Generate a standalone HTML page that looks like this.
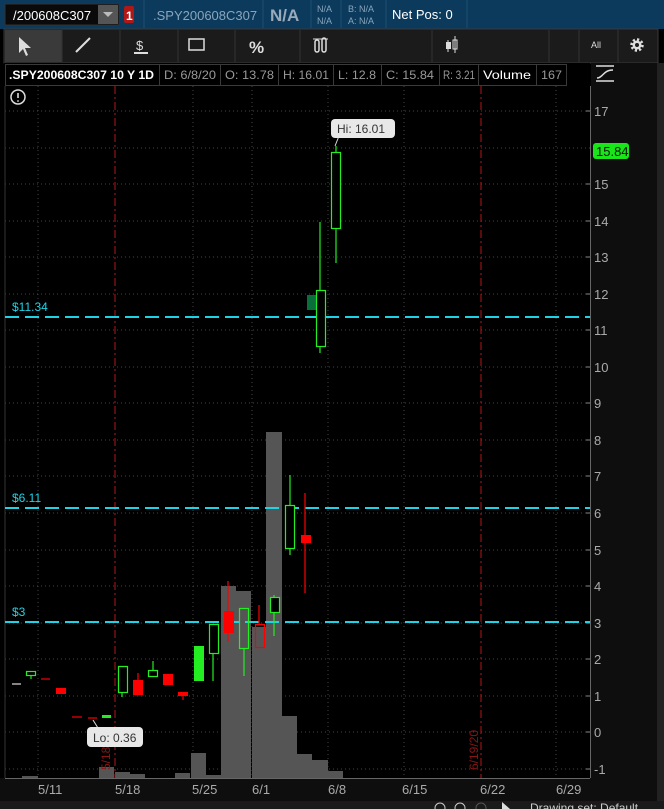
<!DOCTYPE html>
<html><head><meta charset="utf-8"><style>
html,body{margin:0;padding:0;background:#000;width:664px;height:809px;overflow:hidden;font-family:"Liberation Sans",sans-serif}
svg{display:block}
</style></head><body>
<svg width="664" height="809" viewBox="0 0 664 809" xmlns="http://www.w3.org/2000/svg" font-family="Liberation Sans, sans-serif">
<rect width="664" height="809" fill="#000"/>
<!-- top bar -->
<rect x="0" y="0" width="664" height="29" fill="#0b3a5c"/>
<rect x="5" y="4" width="114" height="21" fill="#0a0a0a" stroke="#333"/>
<text x="13" y="20" font-size="13" fill="#fff">/200608C307</text>
<rect x="98" y="5" width="20" height="19" fill="#555"/>
<path d="M103 12 L113 12 L108 17 Z" fill="#bbb"/>
<rect x="124" y="6" width="10" height="17" rx="2" fill="#b01818"/>
<text x="126" y="20" font-size="12" fill="#fff" font-weight="bold">1</text>
<line x1="144" y1="0" x2="144" y2="28" stroke="#1c5070"/>
<text x="153" y="20" font-size="13" fill="#8aa5bb">.SPY200608C307</text>
<line x1="263" y1="0" x2="263" y2="28" stroke="#1c5070"/>
<text x="270" y="21" font-size="17" fill="#9ab" font-weight="bold">N/A</text>
<line x1="311" y1="0" x2="311" y2="28" stroke="#1c5070"/>
<text x="317" y="12" font-size="9" fill="#8aa5bb">N/A</text>
<text x="317" y="24" font-size="9" fill="#8aa5bb">N/A</text>
<line x1="341" y1="0" x2="341" y2="28" stroke="#1c5070"/>
<text x="348" y="12" font-size="9" fill="#8aa5bb">B: N/A</text>
<text x="348" y="24" font-size="9" fill="#8aa5bb">A: N/A</text>
<line x1="386" y1="0" x2="386" y2="28" stroke="#1c5070"/>
<text x="392" y="19" font-size="13" fill="#fff">Net Pos: 0</text>
<line x1="467" y1="0" x2="467" y2="28" stroke="#1c5070"/>
<!-- toolbar -->
<rect x="4" y="29" width="654" height="34" fill="#1b1b1b" stroke="#3a3a3a"/>
<rect x="5" y="30" width="57" height="32" fill="#3a3a3a"/>
<g stroke="#333"><line x1="62" y1="30" x2="62" y2="62"/><line x1="120" y1="30" x2="120" y2="62"/><line x1="178" y1="30" x2="178" y2="62"/><line x1="235" y1="30" x2="235" y2="62"/><line x1="300" y1="30" x2="300" y2="62"/><line x1="432" y1="30" x2="432" y2="62"/><line x1="549" y1="30" x2="549" y2="62"/><line x1="579" y1="30" x2="579" y2="62"/><line x1="618" y1="30" x2="618" y2="62"/></g>
<path d="M19 37 L19 53 L23 49 L26 56 L28 55 L25 48 L31 48 Z" fill="#ddd"/>
<line x1="76" y1="52" x2="90" y2="38" stroke="#ddd" stroke-width="2"/>
<text x="136" y="50" font-size="13" fill="#ddd">$</text>
<line x1="134" y1="53" x2="148" y2="53" stroke="#ddd" stroke-width="2"/>
<rect x="189" y="39" width="15" height="11" fill="none" stroke="#ddd" stroke-width="1.5"/>
<text x="249" y="53" font-size="17" font-weight="bold" fill="#ddd">%</text>
<rect x="315" y="40" width="4" height="12" rx="2" fill="none" stroke="#ddd" stroke-width="1.5"/>
<rect x="322" y="38" width="4" height="14" rx="2" fill="none" stroke="#ddd" stroke-width="1.5"/>
<line x1="313" y1="39" x2="328" y2="39" stroke="#ddd"/>
<rect x="446" y="42" width="5" height="7" fill="#ddd"/><line x1="448" y1="40" x2="448" y2="52" stroke="#ddd"/>
<rect x="453" y="40" width="4" height="9" fill="none" stroke="#ddd"/><line x1="455" y1="36" x2="455" y2="53" stroke="#ddd"/>
<text x="591" y="48" font-size="9" fill="#ddd">All</text>
<circle cx="637" cy="45" r="5" fill="none" stroke="#ddd" stroke-width="3.5" stroke-dasharray="2 1.9"/>
<circle cx="637" cy="45" r="4.5" fill="#ddd"/><circle cx="637" cy="45" r="2" fill="#1b1b1b"/>
<!-- header row -->
<rect x="4" y="63" width="586" height="23" fill="#000"/>
<g stroke="#3a3a3a" fill="none">
<rect x="5.5" y="64.5" width="154" height="21"/><rect x="159.5" y="64.5" width="61" height="21"/><rect x="220.5" y="64.5" width="58" height="21"/><rect x="278.5" y="64.5" width="55" height="21"/><rect x="333.5" y="64.5" width="48" height="21"/><rect x="381.5" y="64.5" width="58" height="21"/><rect x="439.5" y="64.5" width="39" height="21"/><rect x="478.5" y="64.5" width="58" height="21"/><rect x="536.5" y="64.5" width="30" height="21"/>
</g>
<g font-size="12" fill="#999" lengthAdjust="spacingAndGlyphs"><text x="9" y="79" fill="#fff" font-weight="bold" textLength="145" lengthAdjust="spacingAndGlyphs">.SPY200608C307 10 Y 1D</text>
<text x="164" y="79" textLength="52" lengthAdjust="spacingAndGlyphs">D: 6/8/20</text><text x="225" y="79" textLength="49" lengthAdjust="spacingAndGlyphs">O: 13.78</text><text x="283" y="79" textLength="46" lengthAdjust="spacingAndGlyphs">H: 16.01</text><text x="338" y="79" textLength="38" lengthAdjust="spacingAndGlyphs">L: 12.8</text><text x="386" y="79" textLength="48" lengthAdjust="spacingAndGlyphs">C: 15.84</text><text x="443" y="79" textLength="32" lengthAdjust="spacingAndGlyphs">R: 3.21</text><text x="483" y="79" fill="#fff" textLength="48" lengthAdjust="spacingAndGlyphs">Volume</text><text x="541" y="79" textLength="21" lengthAdjust="spacingAndGlyphs">167</text></g>
<!-- right panel -->
<rect x="591" y="63" width="73" height="746" fill="#0e0e0e"/>
<line x1="590.5" y1="86" x2="590.5" y2="778" stroke="#666"/>
<rect x="657" y="63" width="7" height="746" fill="#222"/>
<line x1="596" y1="66" x2="614" y2="66" stroke="#ddd" stroke-width="1.5"/>
<line x1="596" y1="81" x2="614" y2="81" stroke="#ddd" stroke-width="1.5"/>
<path d="M597 78 C603 78 603 70 613 70" stroke="#ddd" fill="none" stroke-width="1.5"/>
<!-- grid -->
<g stroke="#444" stroke-dasharray="1 3">
<line x1="5" y1="111" x2="590" y2="111"/><line x1="5" y1="148" x2="590" y2="148"/><line x1="5" y1="184" x2="590" y2="184"/><line x1="5" y1="221" x2="590" y2="221"/><line x1="5" y1="257" x2="590" y2="257"/><line x1="5" y1="294" x2="590" y2="294"/><line x1="5" y1="330" x2="590" y2="330"/><line x1="5" y1="367" x2="590" y2="367"/><line x1="5" y1="403" x2="590" y2="403"/><line x1="5" y1="440" x2="590" y2="440"/><line x1="5" y1="476" x2="590" y2="476"/><line x1="5" y1="513" x2="590" y2="513"/><line x1="5" y1="550" x2="590" y2="550"/><line x1="5" y1="586" x2="590" y2="586"/><line x1="5" y1="623" x2="590" y2="623"/><line x1="5" y1="659" x2="590" y2="659"/><line x1="5" y1="696" x2="590" y2="696"/><line x1="5" y1="732" x2="590" y2="732"/><line x1="5" y1="769" x2="590" y2="769"/>
<line x1="38" y1="86" x2="38" y2="778"/><line x1="193" y1="86" x2="193" y2="778"/><line x1="252" y1="86" x2="252" y2="778"/><line x1="328" y1="86" x2="328" y2="778"/><line x1="404" y1="86" x2="404" y2="778"/><line x1="556" y1="86" x2="556" y2="778"/>
</g>
<line x1="5" y1="86" x2="5" y2="778" stroke="#333"/>
<!-- price labels -->
<g font-size="13" fill="#aaa">
<text x="594" y="116">17</text><text x="594" y="189">15</text><text x="594" y="226">14</text><text x="594" y="262">13</text><text x="594" y="299">12</text><text x="594" y="335">11</text><text x="594" y="372">10</text><text x="594" y="408">9</text><text x="594" y="445">8</text><text x="594" y="481">7</text><text x="594" y="518">6</text><text x="594" y="555">5</text><text x="594" y="591">4</text><text x="594" y="628">3</text><text x="594" y="664">2</text><text x="594" y="701">1</text><text x="594" y="737">0</text><text x="594" y="774">-1</text>
</g>
<g stroke="#888"><line x1="586" y1="111" x2="590" y2="111"/><line x1="586" y1="184" x2="590" y2="184"/><line x1="586" y1="221" x2="590" y2="221"/><line x1="586" y1="257" x2="590" y2="257"/><line x1="586" y1="294" x2="590" y2="294"/><line x1="586" y1="330" x2="590" y2="330"/><line x1="586" y1="367" x2="590" y2="367"/><line x1="586" y1="403" x2="590" y2="403"/><line x1="586" y1="440" x2="590" y2="440"/><line x1="586" y1="476" x2="590" y2="476"/><line x1="586" y1="513" x2="590" y2="513"/><line x1="586" y1="550" x2="590" y2="550"/><line x1="586" y1="586" x2="590" y2="586"/><line x1="586" y1="623" x2="590" y2="623"/><line x1="586" y1="659" x2="590" y2="659"/><line x1="586" y1="696" x2="590" y2="696"/><line x1="586" y1="732" x2="590" y2="732"/><line x1="586" y1="769" x2="590" y2="769"/></g>
<rect x="593" y="143" width="36" height="16" rx="3" fill="#19e619"/>
<text x="596" y="156" font-size="13" fill="#111">15.84</text>
<!-- volume -->
<g fill="#555">
<rect x="22" y="776" width="16" height="2"/><rect x="99" y="767" width="15" height="11"/><rect x="115" y="772" width="15" height="6"/><rect x="130" y="774" width="15" height="4"/><rect x="175" y="773" width="15" height="5"/><rect x="191" y="753" width="15" height="25"/><rect x="206" y="775" width="15" height="3"/><rect x="221" y="586" width="15" height="192"/><rect x="236" y="591" width="15" height="187"/><rect x="252" y="627" width="14" height="151"/><rect x="266" y="432" width="16" height="346"/><rect x="282" y="716" width="15" height="62"/><rect x="297" y="754" width="15" height="24"/><rect x="312" y="760" width="16" height="18"/><rect x="328" y="771" width="15" height="7"/>
</g>
<!-- red vertical lines -->
<g stroke="#b01818" stroke-dasharray="8 3 2 3"><line x1="115" y1="86" x2="115" y2="778"/><line x1="481" y1="86" x2="481" y2="778"/></g>
<text transform="translate(110,770) rotate(-90)" font-size="12" fill="#8b1515">5/18/20</text>
<text transform="translate(478,770) rotate(-90)" font-size="12" fill="#8b1515">6/19/20</text>
<!-- cyan lines -->
<g stroke="#1fd3e6" stroke-width="2" stroke-dasharray="14 6"><line x1="5" y1="317" x2="590" y2="317"/><line x1="5" y1="508" x2="590" y2="508"/><line x1="5" y1="622" x2="590" y2="622"/></g>
<g font-size="12" fill="#1fd3e6"><text x="12" y="311">$11.34</text><text x="12" y="502">$6.11</text><text x="12" y="616">$3</text></g>
<!-- candles -->
<g stroke-width="1.2">
<line x1="12" y1="684" x2="21" y2="684" stroke="#ddd"/>
<line x1="31" y1="675" x2="31" y2="679" stroke="#22ee22"/><rect x="26.5" y="671.5" width="9" height="4" fill="none" stroke="#22ee22"/>
<line x1="41" y1="679" x2="50" y2="679" stroke="#f00"/>
<rect x="56" y="688" width="10" height="6" fill="#f00"/>
<line x1="72" y1="717" x2="82" y2="717" stroke="#f00"/><line x1="88" y1="718" x2="97" y2="718" stroke="#f00"/>
<rect x="102" y="715" width="9" height="3" fill="#22ee22"/>
<line x1="122" y1="692" x2="122" y2="697" stroke="#22ee22"/><rect x="118.5" y="666.5" width="9" height="26" fill="none" stroke="#22ee22"/>
<line x1="138" y1="673" x2="138" y2="695" stroke="#f00"/><rect x="133" y="680" width="10" height="15" fill="#f00"/>
<line x1="153" y1="661" x2="153" y2="670" stroke="#22ee22"/><rect x="148.5" y="670.5" width="9" height="6" fill="none" stroke="#22ee22"/>
<rect x="163" y="674" width="10" height="11" fill="#f00"/>
<line x1="183" y1="692" x2="183" y2="700" stroke="#f00"/><rect x="178" y="692" width="10" height="4" fill="#f00"/>
<rect x="194" y="646" width="10" height="35" fill="#22ee22"/>
<line x1="213" y1="653" x2="213" y2="681" stroke="#22ee22"/><rect x="209.5" y="624.5" width="9" height="29" fill="none" stroke="#22ee22"/>
<line x1="228" y1="581" x2="228" y2="642" stroke="#f00"/><rect x="224" y="611" width="10" height="22" fill="#f00"/>
<line x1="244" y1="648" x2="244" y2="676" stroke="#22ee22"/><rect x="239.5" y="608.5" width="9" height="40" fill="none" stroke="#22ee22"/>
<line x1="259" y1="605" x2="259" y2="624" stroke="#f00"/><rect x="255.5" y="624.5" width="9" height="23" fill="none" stroke="#f00"/>
<line x1="274" y1="595" x2="274" y2="636" stroke="#22ee22"/><rect x="270.5" y="597.5" width="9" height="15" fill="#000" stroke="#22ee22"/>
<line x1="290" y1="475" x2="290" y2="555" stroke="#22ee22"/><rect x="285.5" y="505.5" width="9" height="43" fill="#000" stroke="#22ee22"/>
<line x1="305" y1="493" x2="305" y2="593" stroke="#f00"/><rect x="301" y="535" width="10" height="8" fill="#f00"/>
<rect x="307" y="295" width="9" height="15" fill="#0a6e3a"/>
<line x1="320" y1="222" x2="320" y2="353" stroke="#22ee22"/><rect x="316.5" y="290.5" width="9" height="56" fill="#000" stroke="#22ee22"/>
<line x1="336" y1="146" x2="336" y2="263" stroke="#22ee22"/><rect x="331.5" y="152.5" width="9" height="76" fill="#000" stroke="#22ee22"/>
</g>
<!-- callouts -->
<path d="M335 146 L339 136" stroke="#ddd"/>
<rect x="331" y="119" width="64" height="19" rx="4" fill="#e8e8e8"/>
<text x="337" y="133" font-size="12" fill="#333">Hi: 16.01</text>
<path d="M93 720 L98 728" stroke="#ddd"/>
<rect x="87" y="727" width="56" height="20" rx="4" fill="#e8e8e8"/>
<text x="93" y="742" font-size="12" fill="#333">Lo: 0.36</text>
<circle cx="18" cy="97" r="7" fill="none" stroke="#ddd" stroke-width="1.5"/>
<line x1="18" y1="93" x2="18" y2="98" stroke="#ddd" stroke-width="1.6"/><circle cx="18" cy="101" r="0.9" fill="#ddd"/>
<!-- x axis -->
<rect x="0" y="778" width="591" height="23" fill="#0e0e0e"/>
<line x1="5" y1="778.5" x2="590" y2="778.5" stroke="#666"/>
<g font-size="13" fill="#aaa"><text x="38" y="794">5/11</text><text x="115" y="794">5/18</text><text x="192" y="794">5/25</text><text x="252" y="794">6/1</text><text x="328" y="794">6/8</text><text x="402" y="794">6/15</text><text x="480" y="794">6/22</text><text x="556" y="794">6/29</text></g>
<rect x="0" y="801" width="664" height="8" fill="#1a1a1a"/>
<text x="530" y="812" font-size="12" fill="#ccc">Drawing set: Default</text>
<path d="M502 802 L510 809 L502 809 Z" fill="#ddd"/>
<circle cx="440" cy="808" r="5" fill="none" stroke="#ccc"/><circle cx="460" cy="808" r="5" fill="none" stroke="#ccc"/><circle cx="481" cy="808" r="5" fill="none" stroke="#555"/>
</svg>
</body></html>
